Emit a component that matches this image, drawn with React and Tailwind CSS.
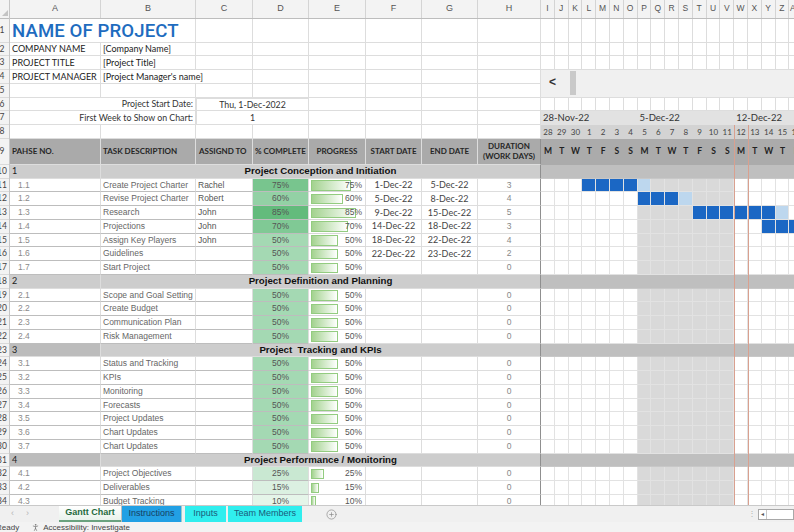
import React from "react";
import { CirclePlus, PersonStanding } from "lucide-react";

const ARIAL = "font-['Liberation_Sans',Arial,sans-serif]";
const CAL = "font-['Lato','Liberation_Sans',sans-serif]";
const ROW = "h-[13.76px]";

const LEFT = ["w-[91px]", "w-[95px]", "w-[57px]", "w-[56px]", "w-[57px]", "w-[56px]", "w-[56px]", "w-[63px]"];
const COL_LETTERS = ["A", "B", "C", "D", "E", "F", "G", "H"];
const GANTT_LETTERS = ["I", "J", "K", "L", "M", "N", "O", "P", "Q", "R", "S", "T", "U", "V", "W", "X", "Y", "Z", "AA"];
const DAYS = [28, 29, 30, 1, 2, 3, 4, 5, 6, 7, 8, 9, 10, 11, 12, 13, 14, 15, 16];
const DAY_LETTERS = ["M", "T", "W", "T", "F", "S", "S", "M", "T", "W", "T", "F", "S", "S", "M", "T", "W", "T", "F"];
const COLS = GANTT_LETTERS.map((_, i) => i);

const groups = [
  {
    n: 1,
    title: "Project Conception and Initiation",
    tasks: [
      ["1.1", "Create Project Charter", "Rachel", 75, "1-Dec-22", "5-Dec-22", 3],
      ["1.2", "Revise Project Charter", "Robert", 60, "5-Dec-22", "8-Dec-22", 4],
      ["1.3", "Research", "John", 85, "9-Dec-22", "15-Dec-22", 5],
      ["1.4", "Projections", "John", 70, "14-Dec-22", "18-Dec-22", 3],
      ["1.5", "Assign Key Players", "John", 50, "18-Dec-22", "22-Dec-22", 4],
      ["1.6", "Guidelines", "", 50, "22-Dec-22", "23-Dec-22", 2],
      ["1.7", "Start Project", "", 50, "", "", 0],
    ],
  },
  {
    n: 2,
    title: "Project Definition and Planning",
    tasks: [
      ["2.1", "Scope and Goal Setting", "", 50, "", "", 0],
      ["2.2", "Create Budget", "", 50, "", "", 0],
      ["2.3", "Communication Plan", "", 50, "", "", 0],
      ["2.4", "Risk Management", "", 50, "", "", 0],
    ],
  },
  {
    n: 3,
    title: "Project\u00a0 Tracking and KPIs",
    darkA: true,
    tasks: [
      ["3.1", "Status and Tracking", "", 50, "", "", 0],
      ["3.2", "KPIs", "", 50, "", "", 0],
      ["3.3", "Monitoring", "", 50, "", "", 0],
      ["3.4", "Forecasts", "", 50, "", "", 0],
      ["3.5", "Project Updates", "", 50, "", "", 0],
      ["3.6", "Chart Updates", "", 50, "", "", 0],
      ["3.7", "Chart Updates", "", 50, "", "", 0],
    ],
  },
  {
    n: 4,
    title: "Project Performance / Monitoring",
    darkA: true,
    tasks: [
      ["4.1", "Project Objectives", "", 25, "", "", 0],
      ["4.2", "Deliverables", "", 15, "", "", 0],
      ["4.3", "Budget Tracking", "", 10, "", "", 0],
    ],
  },
];

const bars = {
  "1.1": { blue: [3, 4, 5, 6], light: [7] },
  "1.2": { blue: [7, 8, 9], light: [10] },
  "1.3": { blue: [11, 12, 13, 14, 15, 16], light: [17] },
  "1.4": { blue: [16, 17, 18], light: [] },
};

const pctBg = {
  85: "bg-[#63bb7c]",
  75: "bg-[#78c58e]",
  70: "bg-[#80c995]",
  60: "bg-[#93d1a5]",
  50: "bg-[#a4d9b3]",
  25: "bg-[#c9e8d2]",
  15: "bg-[#dbf0e1]",
  10: "bg-[#e5f5e9]",
};

const body = [];
groups.forEach((g) => {
  body.push({ type: "group", ...g });
  g.tasks.forEach((t) => body.push({ type: "task", t }));
});

const Cell = ({ w, className = "", children }) => (
  <div
    className={`${w} h-full shrink-0 flex items-center overflow-hidden whitespace-nowrap border-r border-b border-[#dddddd] ${className}`}
  >
    {children}
  </div>
);

const Blanks = ({ from }) => LEFT.slice(from).map((w, i) => <Cell key={i} w={w} />);

const RowNums = () => {
  const heights = ["h-[24px]", ROW, ROW, ROW, ROW, ROW, ROW, ROW, "h-[26px]"];
  const nums = [];
  for (let i = 1; i <= 34; i++) nums.push(i);
  return (
    <div className={`w-[10px] shrink-0 flex flex-col bg-[#f3f3f3] border-r border-[#c6c6c6] ${CAL}`}>
      <div className="h-[18.5px] shrink-0 relative border-b border-[#bdbdbd]">
        <div className="absolute right-[1px] bottom-[2px] w-0 h-0 border-l-[6px] border-l-transparent border-b-[6px] border-b-[#c4c4c4]" />
      </div>
      {nums.map((n) => (
        <div
          key={n}
          className={`${heights[n - 1] || ROW} shrink-0 overflow-hidden flex items-center border-b border-[#dadada]`}
        >
          <div className="-ml-[10px] w-[24px] shrink-0 text-center text-[8.5px] text-[#444]">{n}</div>
        </div>
      ))}
    </div>
  );
};

const LeftTable = () => (
  <div className={`w-[531px] shrink-0 flex flex-col ${CAL}`}>
    <div className="h-[18.5px] shrink-0 flex bg-[#f3f3f3] border-b border-[#bdbdbd]">
      {LEFT.map((w, i) => (
        <div key={i} className={`${w} shrink-0 flex items-center justify-center border-r border-[#d4d4d4] text-[9px] text-[#555] ${ARIAL}`}>
          {COL_LETTERS[i]}
        </div>
      ))}
    </div>

    <div className="h-[24px] shrink-0 flex">
      <Cell w="w-[186px]" className="pl-[2px]">
        <span className="font-['Roboto',sans-serif] font-medium text-[18.6px] text-[#1e6cbf] tracking-[0.1px] leading-none pt-[2px]">
          NAME OF PROJECT
        </span>
      </Cell>
      <Blanks from={2} />
    </div>
    <div className={`${ROW} shrink-0 flex text-[9px] text-[#222]`}>
      <Cell w="w-[91px]" className="pl-[2px]">COMPANY NAME</Cell>
      <Cell w="w-[95px]" className="pl-[2px]">[Company Name]</Cell>
      <Blanks from={2} />
    </div>
    <div className={`${ROW} shrink-0 flex text-[9px] text-[#222]`}>
      <Cell w="w-[91px]" className="pl-[2px]">PROJECT TITLE</Cell>
      <Cell w="w-[95px]" className="pl-[2px]">[Project Title]</Cell>
      <Blanks from={2} />
    </div>
    <div className={`${ROW} shrink-0 flex text-[9px] text-[#222]`}>
      <Cell w="w-[91px]" className="pl-[2px]">PROJECT MANAGER</Cell>
      <Cell w="w-[152px]" className="pl-[2px]">[Project Manager's name]</Cell>
      <Blanks from={3} />
    </div>
    <div className={`${ROW} shrink-0 flex`}>
      <Blanks from={0} />
    </div>
    <div className={`${ROW} shrink-0 flex text-[8.8px] text-[#333]`}>
      <Cell w="w-[186px]" className="justify-end pr-[2px]">Project Start Date:</Cell>
      <Cell w="w-[113px]" className="justify-center border border-[#a3a3a3]">Thu, 1-Dec-2022</Cell>
      <Blanks from={4} />
    </div>
    <div className={`${ROW} shrink-0 flex text-[8.8px] text-[#333]`}>
      <Cell w="w-[186px]" className="justify-end pr-[2px]">First Week to Show on Chart:</Cell>
      <Cell w="w-[113px]" className="justify-center border border-t-0 border-[#a3a3a3]">1</Cell>
      <Blanks from={4} />
    </div>
    <div className={`${ROW} shrink-0 flex`}>
      <Blanks from={0} />
    </div>

    <div className="h-[26px] shrink-0 flex bg-[#aaaaaa] font-bold text-[8px] text-[#262626]">
      <Cell w="w-[91px]" className="pl-[2px] border-[#b6b6b6]">PAHSE NO.</Cell>
      <Cell w="w-[95px]" className="pl-[2px] border-[#b6b6b6]">TASK DESCRIPTION</Cell>
      <Cell w="w-[57px]" className="pl-[3px] border-[#b6b6b6]">ASSIGND TO</Cell>
      <Cell w="w-[56px]" className="justify-center border-[#b6b6b6]">% COMPLETE</Cell>
      <Cell w="w-[57px]" className="justify-center border-[#b6b6b6]">PROGRESS</Cell>
      <Cell w="w-[56px]" className="justify-center border-[#b6b6b6]">START DATE</Cell>
      <Cell w="w-[56px]" className="justify-center border-[#b6b6b6]">END DATE</Cell>
      <Cell w="w-[63px]" className="justify-center text-center border-[#b6b6b6] border-r-[#8f8f8f] leading-[10px]">
        DURATION
        <br />
        (WORK DAYS)
      </Cell>
    </div>

    {body.map((r, idx) =>
      r.type === "group" ? (
        <div key={idx} className={`${ROW} shrink-0 flex bg-[#cdcdcd]`}>
          <Cell
            w="w-[91px]"
            className={`pl-[2px] text-[9px] text-[#222] border-[#c2c2c2] ${r.darkA ? "bg-[#bcbcbc]" : ""}`}
          >
            {r.n}
          </Cell>
          <Cell
            w="w-[440px]"
            className={`justify-center font-bold text-[9.7px] text-[#111] border-[#c2c2c2] border-r-[#8f8f8f] ${ARIAL}`}
          >
            {r.title}
          </Cell>
        </div>
      ) : (
        <TaskLeft key={idx} t={r.t} />
      )
    )}
  </div>
);

const TaskLeft = ({ t }) => {
  const [id, desc, who, pct, start, end, dur] = t;
  return (
    <div className={`${ROW} shrink-0 flex ${ARIAL} text-[8.5px]`}>
      <Cell w="w-[91px]" className="pl-[8px] text-[#8a8a8a] border-b-[#bdbdbd]">{id}</Cell>
      <Cell w="w-[95px]" className="pl-[2px] text-[#666] border-b-[#bdbdbd]">{desc}</Cell>
      <Cell w="w-[57px]" className="pl-[2px] text-[#555] border-b-[#bdbdbd]">{who}</Cell>
      <Cell w="w-[56px]" className={`justify-center text-[#555] border-b-[#bdbdbd] ${pctBg[pct]}`}>{pct}%</Cell>
      <Cell w="w-[57px]" className="relative justify-end pr-[3px] text-[#555] border-b-[#d8d8d8]">
        <div
          className="absolute left-[2px] top-[1.5px] h-[10.5px] border border-[#93cc80] bg-linear-to-r from-[#a3d28f] to-white"
          style={{ width: Math.round(pct * 0.53) }}
        />
        <span className="relative">{pct}%</span>
      </Cell>
      <Cell w="w-[56px]" className={`justify-center text-[#444] text-[9px] ${CAL}`}>{start}</Cell>
      <Cell w="w-[56px]" className={`justify-center text-[#444] text-[9px] ${CAL}`}>{end}</Cell>
      <Cell w="w-[63px]" className="justify-center text-[#888] border-r-[#8f8f8f]">{dur}</Cell>
    </div>
  );
};

const GridRow = ({ h }) => (
  <div className={`${h} shrink-0 flex`}>
    {COLS.map((i) => (
      <div key={i} className="w-[13.8px] h-full shrink-0 border-r border-b border-[#dddddd]" />
    ))}
  </div>
);

const Gantt = () => (
  <div className={`flex-1 min-w-0 overflow-hidden relative ${CAL}`}>
    <div className="w-[262.2px] flex flex-col">
      <div className="h-[18.5px] shrink-0 flex bg-[#f3f3f3] border-b border-[#bdbdbd]">
        {GANTT_LETTERS.map((l, i) => (
          <div key={i} className={`w-[13.8px] shrink-0 flex items-center justify-center border-r border-[#d4d4d4] text-[8.5px] text-[#555] ${ARIAL}`}>
            {l}
          </div>
        ))}
      </div>
      <GridRow h="h-[24px]" />
      <GridRow h={ROW} />
      <GridRow h={ROW} />
      <div className="h-[27.52px] shrink-0 relative bg-[#f0f0f0] border-b border-[#dddddd]">
        <span className={`absolute left-[8px] top-[6px] text-[12px] leading-none font-bold text-[#333] ${ARIAL}`}>&lt;</span>
        <div className="absolute left-[29px] top-[1px] w-[6px] h-[24px] bg-[#c9c9c9]" />
      </div>
      <GridRow h={ROW} />
      <div className={`${ROW} shrink-0 flex bg-[#e2e2e2] text-[9.5px] text-[#333]`}>
        {["28-Nov-22", "5-Dec-22", "12-Dec-22"].map((d) => (
          <div key={d} className="w-[96.6px] shrink-0 pl-[2px] flex items-center whitespace-nowrap">{d}</div>
        ))}
      </div>
      <div className={`${ROW} shrink-0 flex bg-[#d3d3d3] text-[8px] text-[#444]`}>
        {DAYS.map((d, i) => (
          <div key={i} className="w-[13.8px] shrink-0 flex items-center justify-center">{d}</div>
        ))}
      </div>
      <div className="h-[26px] shrink-0 flex bg-[#ababab] font-bold text-[8.5px] text-[#222]">
        {DAY_LETTERS.map((d, i) => (
          <div key={i} className="w-[13.8px] shrink-0 flex items-center justify-center">{d}</div>
        ))}
      </div>
      {body.map((r, idx) =>
        r.type === "group" ? (
          <div key={idx} className={`${ROW} shrink-0 bg-[#bfbfbf] border-b border-[#c8c8c8]`} />
        ) : (
          <div key={idx} className={`${ROW} shrink-0 flex`}>
            {COLS.map((i) => {
              const b = bars[r.t[0]];
              let bg = i >= 7 && i <= 13 ? "bg-[#d9d9d9]" : "bg-white";
              if (b && b.light.includes(i)) bg = "bg-[#bdd7ee]";
              if (b && b.blue.includes(i)) bg = "bg-[#1b67c4]";
              return <div key={i} className={`w-[13.8px] h-full shrink-0 border-r border-b border-[#e2e2e2] ${bg}`} />;
            })}
          </div>
        )
      )}
    </div>
    <div className="absolute left-[192.7px] top-[125px] bottom-0 w-px bg-[#d9a08f]" />
    <div className="absolute left-[206.5px] top-[125px] bottom-0 w-px bg-[#d9a08f]" />
  </div>
);

const SheetTabs = () => (
  <div className={`h-[17px] shrink-0 flex items-stretch bg-[#f0f0f0] border-t border-[#c9c9c9] text-[9px] ${ARIAL}`}>
    <div className="w-[59px] shrink-0 flex items-center gap-[12px] pl-[11px] text-[#b5b5b5] text-[9px]">
      <span>‹</span>
      <span>›</span>
    </div>
    <div className="w-[62px] shrink-0 flex items-center justify-center bg-linear-to-b from-white to-[#e9f2ec] border-b-2 border-[#6aa27f] font-bold text-[#1e6b3c] shadow-[1px_0_0_#bdbdbd]">
      Gantt Chart
    </div>
    <div className="w-[60px] ml-[1px] shrink-0 flex items-center justify-center bg-[#22a0e4] text-[#163e63] border-r border-[#9cc]">
      Instructions
    </div>
    <div className="w-[41px] ml-[3px] shrink-0 flex items-center justify-center bg-[#30eeee] text-[#1b5b7b]">Inputs</div>
    <div className="w-[74px] ml-[2px] shrink-0 flex items-center justify-center bg-[#30eeee] text-[#1b5b7b]">Team Members</div>
    <div className="w-[58px] shrink-0 flex items-center justify-center pl-[1px]">
      <CirclePlus size={11} strokeWidth={1.5} className="text-[#8a8a8a]" />
    </div>
    <div className="flex-1" />
    <div className="w-[12px] shrink-0 flex items-center justify-center text-[#b0b0b0] text-[8px]">⋮</div>
    <div className="w-[36px] shrink-0 flex items-center">
      <div className="h-[11px] w-full bg-white border border-[#a8a8a8] flex items-center">
        <div className="w-[8px] h-full border-r border-[#c8c8c8] flex items-center justify-center text-[6px] text-[#555]">◂</div>
      </div>
    </div>
  </div>
);

const StatusBar = () => (
  <div className={`flex-1 overflow-hidden flex items-start bg-[#f3f3f3] text-[8px] text-[#444] leading-[9px] pt-[1px] ${ARIAL}`}>
    <span className="-ml-[4px]">Ready</span>
    <PersonStanding size={9} strokeWidth={1.5} className="ml-[12px] text-[#555]" />
    <span className="ml-[3px]">Accessibility: Investigate</span>
  </div>
);

export default function App() {
  return (
    <div className="w-[794px] h-[532px] overflow-hidden bg-white flex flex-col">
      <div className="h-[505px] shrink-0 overflow-hidden flex">
        <RowNums />
        <LeftTable />
        <Gantt />
      </div>
      <SheetTabs />
      <StatusBar />
    </div>
  );
}
